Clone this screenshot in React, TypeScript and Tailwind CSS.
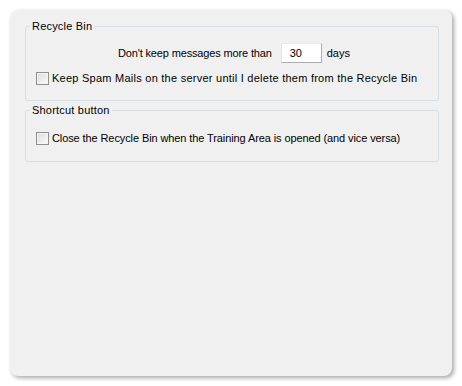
import React from 'react';

const Checkbox: React.FC = () => (
  <span className="inline-block w-[13px] h-[13px] border border-[#8e8f8f] bg-gradient-to-br from-[#dcdcdc] to-[#fbfbfb] shrink-0 shadow-[inset_0_0_0_1px_#f4f4f4]" />
);

const App: React.FC = () => {
  return (
    <div
      className="w-[462px] h-[386px] bg-white pt-[10px] pl-[10px]"
      style={{ fontFamily: '"Liberation Sans", Arial, sans-serif' }}
    >
      <div className="w-[442px] h-[366px] bg-[#f0f0f0] rounded-[8px] shadow-[2px_2px_4px_rgba(0,0,0,0.35)] pt-[10px] pl-[15px] pr-[13px] text-[11px] leading-[13px] text-black whitespace-nowrap">
        {/* Recycle Bin */}
        <fieldset className="border border-[#d5dfe5] rounded-[3px] pl-[10px] pr-[6px] pb-[15px] pt-[10px] min-w-0">
          <legend className="px-[2px] -ml-[6px] tracking-[0.2px]">Recycle Bin</legend>
          <div className="flex items-center justify-center h-[20px]">
            <span className="tracking-[-0.15px]">Don't keep messages more than</span>
            <div className="ml-[9px] mr-[5px] w-[41px] h-[20px] bg-white border border-[#abadb3] border-t-[#e3e9ef] border-l-[#e2e3ea] flex items-center pl-[8px]">
              30
            </div>
            <span>days</span>
          </div>
          <div className="flex items-center gap-[3px] mt-[9px] h-[13px] tracking-[0.25px]">
            <Checkbox />
            <span>Keep Spam Mails on the server until I delete them from the Recycle Bin</span>
          </div>
        </fieldset>

        {/* Shortcut button */}
        <fieldset className="border border-[#d5dfe5] rounded-[3px] pl-[10px] pr-[6px] pb-[16px] pt-[15px] mt-[3px] min-w-0">
          <legend className="px-[2px] -ml-[6px] tracking-[0.2px]">Shortcut button</legend>
          <div className="flex items-center gap-[3px] h-[13px] tracking-[-0.1px]">
            <Checkbox />
            <span>Close the Recycle Bin when the Training Area is opened (and vice versa)</span>
          </div>
        </fieldset>
      </div>
    </div>
  );
};

export default App;
